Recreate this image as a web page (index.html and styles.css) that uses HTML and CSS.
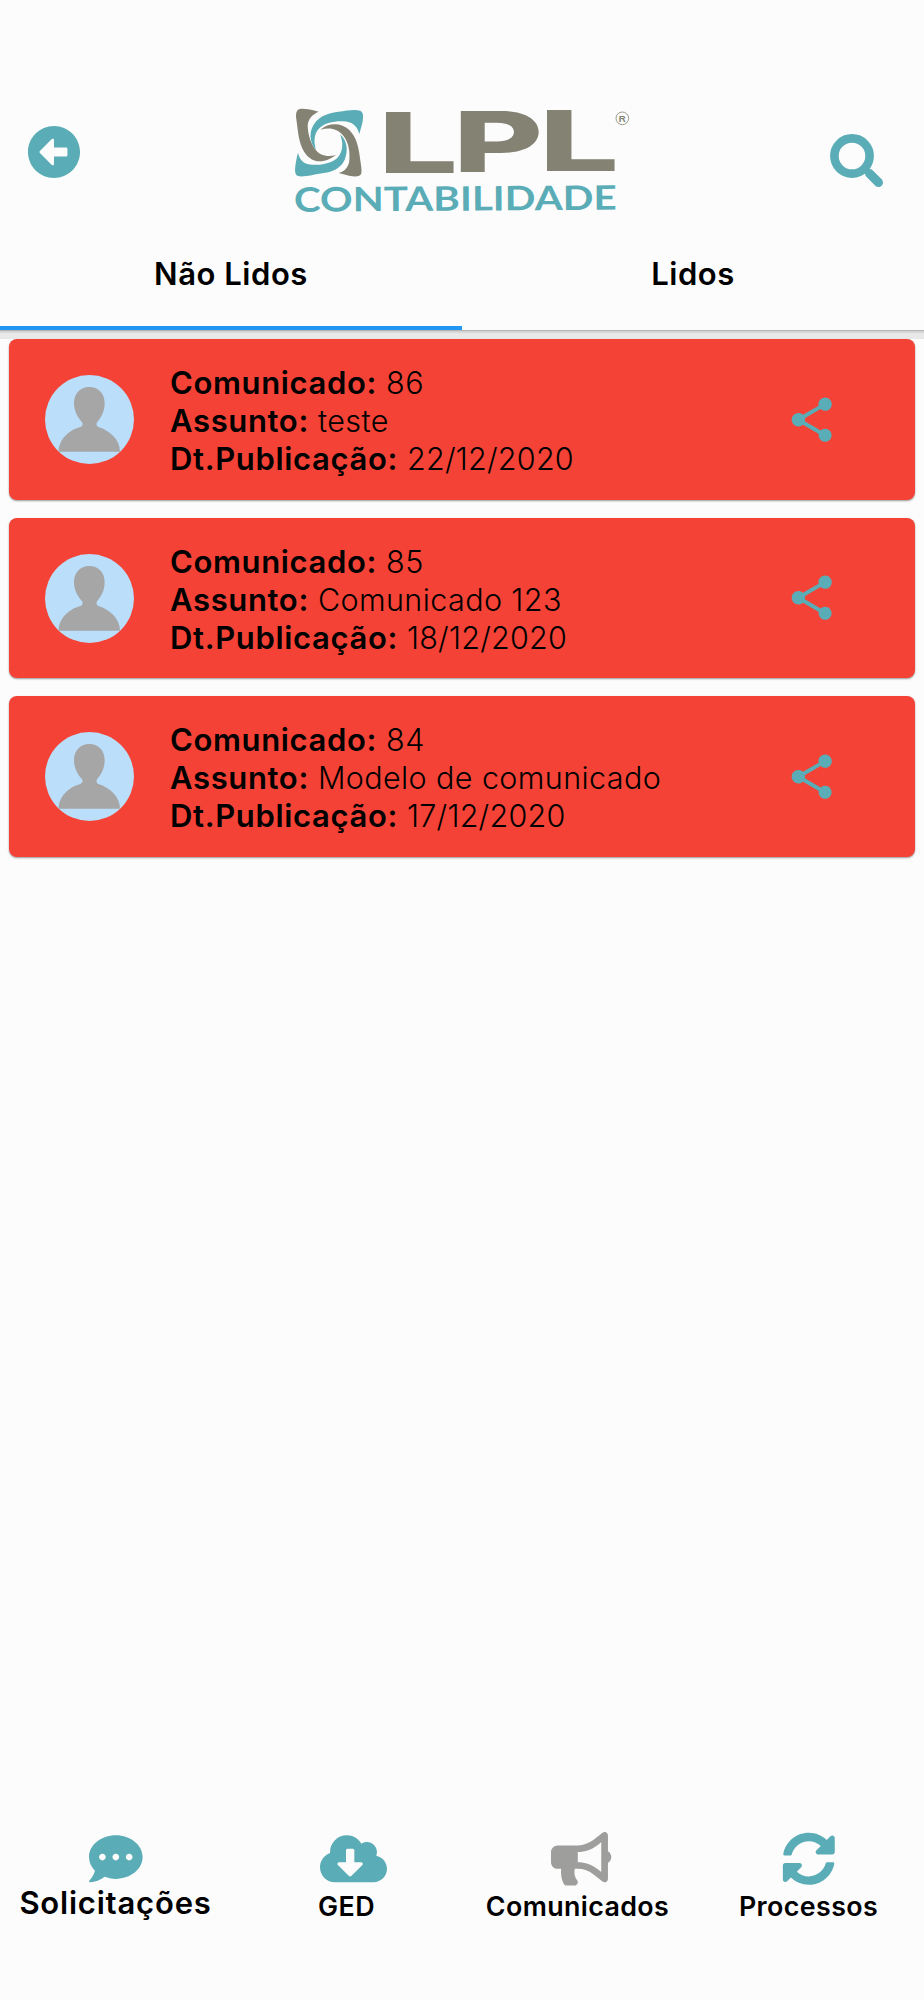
FILE: index.html
```html
<!DOCTYPE html>
<html lang="pt-BR">
<head>
<meta charset="utf-8">
<title>Comunicados</title>
<link rel="stylesheet" href="styles.css">
</head>
<body>
<svg class="defs" width="0" height="0" aria-hidden="true">
  <symbol id="share" viewBox="0 0 24 24"><path d="M18 16.08c-.76 0-1.44.3-1.96.77L8.91 12.7c.05-.23.09-.46.09-.7s-.04-.47-.09-.7l7.05-4.11c.54.5 1.25.81 2.04.81 1.66 0 3-1.34 3-3s-1.34-3-3-3-3 1.34-3 3c0 .24.04.47.09.7L8.04 9.81C7.5 9.31 6.79 9 6 9c-1.66 0-3 1.34-3 3s1.34 3 3 3c.79 0 1.5-.31 2.04-.81l7.12 4.16c-.05.21-.08.43-.08.65 0 1.61 1.31 2.92 2.92 2.92s2.92-1.31 2.92-2.92-1.31-2.92-2.92-2.92z"/></symbol>
  <symbol id="person" viewBox="0 0 267 267"><path d="M133 36c29 0 46 21 46 49 0 23-10 43-22 55-4 5-3 13 3 16 35 11 65 38 65 74H41c0-36 30-65 65-74 7-3 9-11 4-16-12-12-23-32-23-55 0-28 17-49 46-49z"/></symbol>
</svg>
<div class="screen">
  <header class="appbar">
    <div class="toolbar">
      <svg class="back" viewBox="8 8 496 496"><path d="M256 504C119 504 8 393 8 256S119 8 256 8s248 111 248 248-111 248-248 248zm116-292H256v-70.9c0-10.7-13-16.1-20.5-8.5L121.2 247.5c-4.7 4.7-4.7 12.2 0 16.9l114.3 114.9c7.6 7.6 20.5 2.2 20.5-8.5V300h116c6.6 0 12-5.4 12-12v-64c0-6.6-5.4-12-12-12z"/></svg>
      <svg class="logo" viewBox="0 0 1080 390">
        <g class="taupe">
          <path d="M116 50C95 44 72 40 59 42C48 45 47 58 49 73C54 105 54 129 66 158C79 188 103 203 130 198C146 195 158 187 168 180C143 188 117 181 105 162C90 140 84 117 83 92C84 72 97 58 116 50Z"/>
          <path d="M122 104C146 82 184 82 208 105C230 127 236 158 240 190C243 212 247 228 243 238C236 247 222 245 207 242L176 234C195 229 207 215 208 195C210 171 207 144 190 122C173 101 148 96 122 104Z"/>
        </g>
        <g class="teal">
          <path d="M108 164C87 141 87 108 103 86C119 62 147 54 176 50C200 46 226 42 241 47C252 54 250 67 247 84L238 117C231 91 215 80 190 79C162 78 132 83 115 103C102 119 101 141 108 164Z"/>
          <path d="M180 118C202 136 205 169 194 194C183 219 158 231 131 234C105 238 75 246 57 244C45 241 44 231 46 213C48 200 50 186 54 173C60 198 75 209 98 209C128 212 158 203 174 187C190 168 190 142 180 118Z"/>
        </g>
        <text class="mark" transform="translate(294 234) scale(1.68 1)">L</text>
        <text class="mark" transform="translate(519 232) scale(1.64 1)">P</text>
        <text class="mark" transform="translate(777 229) scale(1.68 1)">L</text>
        <text class="word" x="42" y="350" textLength="968" lengthAdjust="spacingAndGlyphs" transform="rotate(-.35 42 350)">CONTABILIDADE</text>
        <circle class="ring" cx="1027" cy="70" r="19"/>
        <text class="reg" x="1027" y="80">R</text>
      </svg>
      <svg class="search" viewBox="0 0 54 54"><circle cx="22" cy="22" r="17.6"/><path class="neck" d="M34 34L40 40"/><path class="handle" d="M39.5 39.5L48.5 48.5"/></svg>
    </div>
    <nav class="tabs">
      <div class="tab active">Não Lidos</div>
      <div class="tab">Lidos</div>
    </nav>
  </header>
  <main class="list">
    <article class="card">
      <div class="avatar"><svg><use href="#person"/></svg></div>
      <div class="info">
        <p><b>Comunicado:</b> 86</p>
        <p><b>Assunto:</b> teste</p>
        <p><b>Dt.Publicação:</b> <span class="date">22/12/2020</span></p>
      </div>
      <svg class="share"><use href="#share"/></svg>
    </article>
    <article class="card">
      <div class="avatar"><svg><use href="#person"/></svg></div>
      <div class="info">
        <p><b>Comunicado:</b> 85</p>
        <p><b>Assunto:</b> Comunicado 123</p>
        <p><b>Dt.Publicação:</b> <span class="date">18/12/2020</span></p>
      </div>
      <svg class="share"><use href="#share"/></svg>
    </article>
    <article class="card">
      <div class="avatar"><svg><use href="#person"/></svg></div>
      <div class="info">
        <p><b>Comunicado:</b> 84</p>
        <p><b>Assunto:</b> Modelo de comunicado</p>
        <p><b>Dt.Publicação:</b> <span class="date">17/12/2020</span></p>
      </div>
      <svg class="share"><use href="#share"/></svg>
    </article>
  </main>
  <footer class="bottom">
    <div class="item big">
      <svg class="comment" viewBox="0 0 512 512"><path d="M256 32C114.6 32 0 125.1 0 240c0 49.6 21.4 95 57 130.7C44.5 421.1 2.7 466 2.2 466.5c-2.2 2.3-2.8 5.7-1.5 8.7S4.8 480 8 480c66.3 0 116-31.8 140.6-51.4 32.7 12.3 69 19.4 107.4 19.4 141.4 0 256-93.1 256-208S397.4 32 256 32zM128 272c-17.7 0-32-14.3-32-32s14.3-32 32-32 32 14.3 32 32-14.3 32-32 32zm128 0c-17.7 0-32-14.3-32-32s14.3-32 32-32 32 14.3 32 32-14.3 32-32 32zm128 0c-17.7 0-32-14.3-32-32s14.3-32 32-32 32 14.3 32 32-14.3 32-32 32z"/></svg>
      <span>Solicitações</span>
    </div>
    <div class="item">
      <svg class="cloud" viewBox="0 0 640 512"><path d="M537.6 226.6c4.1-10.7 6.4-22.4 6.4-34.6 0-53-43-96-96-96-19.7 0-38.1 6-53.3 16.2C367 64.2 315.3 32 256 32c-88.4 0-160 71.6-160 160 0 2.7.1 5.4.2 8.1C40.2 219.8 0 273.2 0 336c0 79.5 64.5 144 144 144h368c70.7 0 128-57.3 128-128 0-61.9-44-113.6-102.4-125.4zm-132.9 88.7L299.3 420.7c-6.2 6.2-16.4 6.2-22.6 0L171.3 315.3c-10.1-10.1-2.9-27.3 11.3-27.3H248V176c0-8.8 7.2-16 16-16h48c8.8 0 16 7.2 16 16v112h65.4c14.2 0 21.4 17.2 11.3 27.3z"/></svg>
      <span>GED</span>
    </div>
    <div class="item current">
      <svg class="horn" viewBox="0 0 576 512"><path d="M576 240c0-23.63-12.95-44.04-32-55.12V32.01C544 23.26 537.02 0 512 0c-7.12 0-14.19 2.38-19.98 7.02l-85.03 68.03C364.28 109.19 310.66 128 256 128H64c-35.35 0-64 28.65-64 64v96c0 35.35 28.65 64 64 64h33.7c-1.39 10.48-2.18 21.14-2.18 32 0 39.77 9.26 77.35 25.56 110.94 5.19 10.69 16.52 17.06 28.4 17.06h74.28c26.05 0 41.69-29.84 25.9-50.56-16.4-21.52-26.15-48.36-26.15-77.44 0-11.11 1.62-21.79 4.41-32H256c54.66 0 108.28 18.81 150.98 52.95l85.03 68.03a32.023 32.023 0 0 0 19.98 7.02c24.92 0 32-22.78 32-32V295.13C563.05 284.04 576 263.63 576 240zm-96 141.42l-33.05-26.44C392.95 311.78 325.12 288 256 288v-96c69.12 0 136.95-23.78 190.95-66.98L480 98.58v282.84z"/></svg>
      <span>Comunicados</span>
    </div>
    <div class="item">
      <svg class="sync" viewBox="0 0 512 512"><path d="M370.72 133.28C339.458 104.008 298.888 87.962 255.848 88c-77.458.068-144.328 53.178-162.791 126.85-1.344 5.363-6.122 9.15-11.651 9.15H24.103c-7.498 0-13.194-6.807-11.807-14.176C33.933 94.924 134.813 8 256 8c66.448 0 126.791 26.136 171.315 68.685L463.03 40.97C478.149 25.851 504 36.559 504 57.941V192c0 13.255-10.745 24-24 24H345.941c-21.382 0-32.09-25.851-16.971-40.971l41.75-41.749zM32 296h134.059c21.382 0 32.09 25.851 16.971 40.971l-41.75 41.75c31.262 29.273 71.835 45.319 114.876 45.28 77.418-.07 144.315-53.144 162.787-126.849 1.344-5.363 6.122-9.15 11.651-9.15h57.304c7.498 0 13.194 6.807 11.807 14.176C478.067 417.076 377.187 504 256 504c-66.448 0-126.791-26.136-171.315-68.685L48.97 471.03C33.851 486.149 8 475.441 8 454.059V320c0-13.255 10.745-24 24-24z"/></svg>
      <span>Processos</span>
    </div>
  </footer>
</div>
</body>
</html>
```
FILE: styles.css
```css
* { box-sizing: border-box; }
body { margin: 0; background: #fcfcfc; color: #000; font-family: Inter, "Liberation Sans", sans-serif; }
svg { display: block; overflow: visible; }
p { margin: 0; }
.defs { position: absolute; }
.screen { height: 2000px; display: flex; flex-direction: column; }

.appbar { height: 330px; padding-top: 95px; display: flex; flex-direction: column; justify-content: space-between; flex: none; box-shadow: 0 1px 1px #b4b4b4, 0 3px 1px #dadada, 0 9px 0 #e8e8e8; }
.toolbar { height: 130px; padding: 0 40px 0 27.5px; display: flex; justify-content: space-between; }
.back { width: 52px; height: 52px; margin-top: 31px; fill: #5aacb6; }
.logo { width: 360px; height: 130px; margin-left: 11px; }
.search { width: 54px; height: 54px; margin-top: 39px; fill: none; stroke: #5aacb6; stroke-width: 8.6; }
.neck { stroke-width: 5; }
.handle { stroke-width: 9; stroke-linecap: butt; }
.handle { stroke-linecap: round; }
.taupe, .mark { fill: #848273; }
.teal, .word { fill: #5aacb6; }
.mark { font: 800 253px Inter, sans-serif; }
.word { font: 700 101px Lato, sans-serif; }
.ring { fill: none; stroke: #9b998c; stroke-width: 3; }
.reg { font: 600 29px "Liberation Sans", sans-serif; text-anchor: middle; fill: #848273; }

.tabs { display: flex; height: 88px; }
.tab { flex: 1; padding-top: 13px; text-align: center; font-size: 31px; line-height: 38px; font-weight: 600; letter-spacing: .55px; }
.tab.active { border-bottom: 4px solid #2196f3; }

.list { flex: 1; padding: 9.4px 9px 0; display: flex; flex-direction: column; gap: 18px; }
.card { height: 160.5px; flex: none; padding: 0 76.5px 0 36px; display: flex; align-items: center; background: #f44336; border-radius: 8px; box-shadow: 0 1px 2px rgba(0,0,0,.4); }
.avatar { width: 89px; height: 89px; border-radius: 50%; background: #bbdefb; flex: none; }
.avatar svg { width: 89px; height: 89px; fill: #a6a6a6; }
.info { flex: 1; margin-left: 36px; font-size: 30.5px; font-weight: 350; line-height: 38px; letter-spacing: .4px; white-space: nowrap; padding-top: 3px; }
.info b { font-size: 31px; font-weight: 600; letter-spacing: .65px; }
.date { letter-spacing: .25px; }
.share { width: 53.5px; height: 53.5px; fill: #5aacb6; }

.bottom { height: 180px; display: grid; grid-template-columns: repeat(4, 1fr); }
.item { display: flex; flex-direction: column; align-items: center; padding-top: 12px; font-size: 26.8px; font-weight: 600; letter-spacing: .4px; }
.item svg { height: 53.6px; fill: #5aacb6; }
.item span { margin-top: 7px; line-height: 26px; }
.item.big { font-size: 31px; letter-spacing: .8px; }
.item.big span { margin-top: 4px; }
.item.current svg { fill: #9e9e9c; }
.comment, .sync { width: 53.6px; }
.cloud { width: 67px; margin-left: 14px; }
.horn { width: 60.3px; margin-left: 7px; }
```
